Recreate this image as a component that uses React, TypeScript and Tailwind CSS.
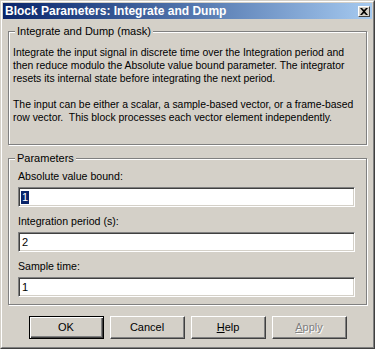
import React from "react";

const font = { fontFamily: '"Liberation Sans", Arial, sans-serif' };

// etched frame box with caption over its top border
const GroupBox: React.FC<{ title: string; className?: string; children: React.ReactNode }> = ({ title, className, children }) => (
  <div className={`relative border border-[#808080] shadow-[1px_1px_0_#fff,inset_1px_1px_0_#fff] ${className ?? ""}`}>
    <span className="absolute left-[6px] top-[-7px] bg-[#d4d0c8] px-[2px] text-[11px] leading-[13px] text-black">
      {title}
    </span>
    {children}
  </div>
);

const Field: React.FC<{ label: string; value: string; selected?: boolean; last?: boolean }> = ({ label, value, selected, last }) => (
  <div className={last ? "" : "mb-[8px]"}>
    <div className="mb-[4px] h-[13px] text-[10.6px] leading-[13px] text-black">{label}</div>
    <div className="flex h-[20px] w-[337px] items-center border border-t-[#808080] border-l-[#808080] border-r-white border-b-white bg-white pl-[2px] shadow-[inset_1px_1px_0_#404040,inset_-1px_-1px_0_#d4d0c8]">
      {selected ? (
        <span className="bg-[#0a246a] px-[1px] text-[11px] leading-[13px] text-white">{value}</span>
      ) : (
        <span className="px-[1px] text-[11px] leading-[13px] text-black">{value}</span>
      )}
    </div>
  </div>
);

const Btn: React.FC<{ children: React.ReactNode; isDefault?: boolean; disabled?: boolean }> = ({ children, isDefault, disabled }) => {
  const edge = isDefault
    ? "border border-black shadow-[inset_1px_1px_0_#fff,inset_-1px_-1px_0_#404040,inset_-2px_-2px_0_#808080]"
    : "border border-t-white border-l-white border-r-[#404040] border-b-[#404040] shadow-[inset_-1px_-1px_0_#808080]";
  return (
    <button
      className={`flex h-[23px] w-[75px] items-center justify-center bg-[#d4d0c8] text-[11px] leading-[13px] ${edge} ${
        disabled ? "text-[#808080] [text-shadow:1px_1px_0_#fff]" : "text-black"
      }`}
      style={font}
    >
      {children}
    </button>
  );
};

export default function App() {
  return (
    <div className="h-[349px] w-[375px] bg-[#d4d0c8]" style={font}>
      <div className="h-full border border-t-[#d4d0c8] border-l-[#d4d0c8] border-r-[#404040] border-b-[#404040]">
        <div className="flex h-full flex-col border border-t-white border-l-white border-r-[#808080] border-b-[#808080] p-[1px]">
          {/* caption */}
          <div className="flex h-[16px] items-center justify-between bg-gradient-to-r from-[#0a246a] to-[#a6caf0] pl-[2px] pr-[2px]">
            <span className="text-[12px] font-bold leading-[14px] text-white">Block Parameters: Integrate and Dump</span>
            <div className="flex h-[11px] w-[12px] items-center justify-center border border-t-white border-l-white border-r-[#404040] border-b-[#404040] bg-[#d4d0c8]">
              <svg width="8" height="7" viewBox="0 0 8 7">
                <path d="M0 0h2l2 2 2-2h2L5 3.5 8 7H6L4 5 2 7H0l3-3.5z" fill="#000" />
              </svg>
            </div>
          </div>

          <div className="flex flex-1 flex-col px-[5px] pt-[12px]">
            <GroupBox title="Integrate and Dump (mask)" className="h-[114px]">
              <div className="whitespace-pre pl-[4px] pt-[14px] text-[10.4px] leading-[13px] text-black">
                <div>Integrate the input signal in discrete time over the Integration period and</div>
                <div>then reduce modulo the Absolute value bound parameter. The integrator</div>
                <div>resets its internal state before integrating the next period.</div>
                <div>&nbsp;</div>
                <div>The input can be either a scalar, a sample-based vector, or a frame-based</div>
                <div>row vector.  This block processes each vector element independently.</div>
              </div>
            </GroupBox>

            <GroupBox title="Parameters" className="mt-[13px] h-[147px]">
              <div className="px-[9px] pt-[11px]">
                <Field label="Absolute value bound:" value="1" selected />
                <Field label="Integration period (s):" value="2" />
                <Field label="Sample time:" value="1" last />
              </div>
            </GroupBox>

            <div className="mt-[11px] flex justify-center gap-[6px]">
              <Btn isDefault>OK</Btn>
              <Btn>Cancel</Btn>
              <Btn>
                <span className="underline">H</span>elp
              </Btn>
              <Btn disabled>
                <span className="underline">A</span>pply
              </Btn>
            </div>
          </div>
        </div>
      </div>
    </div>
  );
}
